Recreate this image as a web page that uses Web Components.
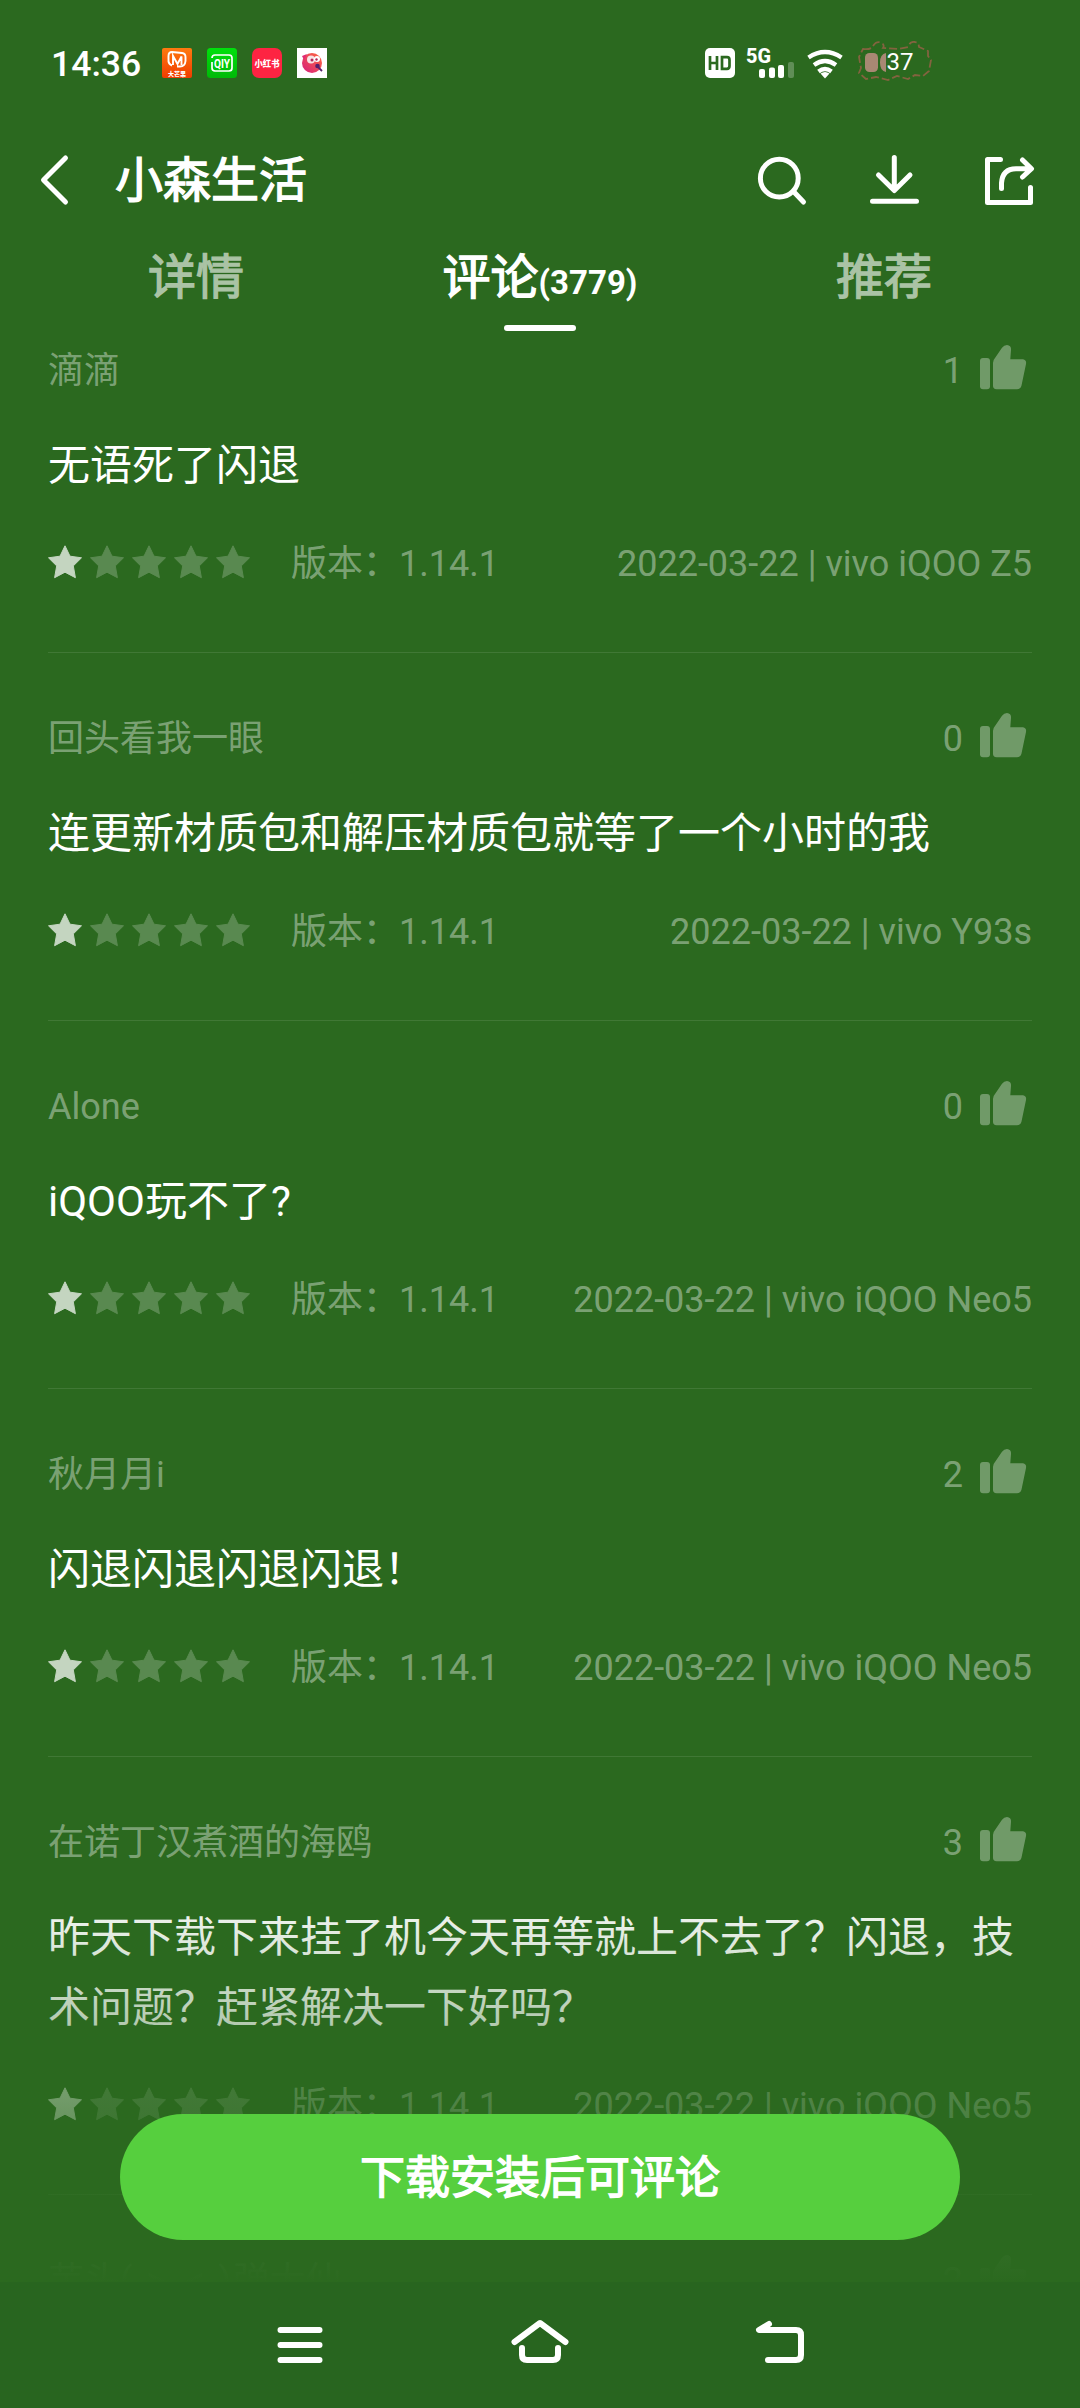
<!DOCTYPE html>
<html lang="zh-CN">
<head>
<meta charset="utf-8">
<title>小森生活</title>
<style>
html,body{margin:0;height:100%;background:#2b691f}
body{font-family:Roboto,"Noto Sans CJK SC",sans-serif;color:#fff;overflow:hidden}
</style>
</head>
<body>
<app-page>
  <status-bar slot="top" time="14:36" battery="37"></status-bar>
  <title-bar slot="top">小森生活</title-bar>
  <tab-bar slot="top">
    <tab-item>详情</tab-item>
    <tab-item active count="(3779)">评论</tab-item>
    <tab-item>推荐</tab-item>
  </tab-bar>
  <review-card first name="滴滴" likes="1" stars="1" version="1.14.1" meta="2022-03-22 | vivo iQOO Z5">无语死了闪退</review-card>
  <review-card name="回头看我一眼" likes="0" stars="1" version="1.14.1" meta="2022-03-22 | vivo Y93s">连更新材质包和解压材质包就等了一个小时的我</review-card>
  <review-card name="Alone" likes="0" stars="1" version="1.14.1" meta="2022-03-22 | vivo iQOO Neo5">iQOO玩不了?</review-card>
  <review-card name="秋月月i" likes="2" stars="1" version="1.14.1" meta="2022-03-22 | vivo iQOO Neo5">闪退闪退闪退闪退！</review-card>
  <review-card name="在诺丁汉煮酒的海鸥" likes="3" stars="1" version="1.14.1" meta="2022-03-22 | vivo iQOO Neo5">昨天下载下来挂了机今天再等就上不去了？闪退，技术问题？赶紧解决一下好吗？</review-card>
  <review-card teaser likes="2"><span slot="name">芋头<span style="letter-spacing:2.5px">( &gt;_&lt; )</span>弹大仙</span></review-card>
  <install-button slot="action">下载安装后可评论</install-button>
  <nav-bar slot="nav"></nav-bar>
</app-page>
<script>
function define(name, render) {
  customElements.define(name, class extends HTMLElement {
    connectedCallback() {
      if (this.shadowRoot) return;
      const t = document.createElement('template');
      t.innerHTML = render(this);
      this.attachShadow({ mode: 'open' }).append(t.content.cloneNode(true));
    }
  });
}

define('app-page', () => `
<style>
:host{display:flex;flex-direction:column;width:1080px;height:2408px;position:relative;overflow:hidden;background:#2b691f}
main{height:1946px;overflow:hidden;flex:none}
.foot{position:absolute;left:0;top:1882px;width:1080px;height:400px;box-sizing:border-box;padding-bottom:42px;
 display:flex;justify-content:center;align-items:flex-end;background:linear-gradient(rgba(43,105,31,0),rgb(43,105,31))}
</style>
<slot name="top"></slot>
<main><slot></slot></main>
<div class="foot"><slot name="action"></slot></div>
<slot name="nav"></slot>`);

define('status-bar', e => `
<style>
:host{display:flex;height:129px;flex:none;box-sizing:border-box;padding:0 0 3px 51px;align-items:center}
.time{font:500 35.6px/40px Roboto,sans-serif;width:111px;padding-top:2px}
.apps{display:flex;gap:15px}
svg{display:block}
.sys{margin-left:378px}
text{font-family:Roboto,"Noto Sans CJK SC",sans-serif}
</style>
<div class="time">${e.getAttribute('time')}</div>
<div class="apps">
 <svg width="30" height="30" viewBox="0 0 30 30"><defs><linearGradient id="o" x2="0" y2="1"><stop stop-color="#ff7a10"/><stop offset="1" stop-color="#f03c00"/></linearGradient></defs><rect width="30" height="30" rx="2" fill="url(#o)"/><path d="M10 17.500Q6 16 6.500 11V8Q6.500 4 10 4L20 5Q23.500 5.500 23.500 9V13Q23 18.500 18 18.500H15M11 17V8L15.500 16L19.500 8.500V17" fill="none" stroke="#fff" stroke-width="1.900"/><text x="15" y="27.500" font-size="6" font-weight="900" text-anchor="middle" fill="#fff">大芒果</text></svg>
 <svg width="30" height="30" viewBox="0 0 30 30"><defs><linearGradient id="g" x2="0" y2="1"><stop stop-color="#00e00c"/><stop offset="1" stop-color="#00b908"/></linearGradient></defs><rect width="30" height="30" rx="3.500" fill="url(#g)"/><path d="M5 10Q5 7 8 7H22Q25 7 25 10V20Q25 23 22 23H8Q5 23 5 20V14" fill="none" stroke="#fff" stroke-width="1.700"/><text x="15" y="19.500" font-size="12" font-weight="700" text-anchor="middle" textLength="16" lengthAdjust="spacingAndGlyphs" fill="#fff">QIY</text></svg>
 <svg width="30" height="30" viewBox="0 0 30 30"><rect width="30" height="30" rx="7" fill="#fd2442"/><text x="15" y="18.500" font-size="9" font-weight="900" text-anchor="middle" textLength="25" lengthAdjust="spacingAndGlyphs" fill="#fff">小红书</text></svg>
 <svg width="30" height="30" viewBox="0 0 30 30"><defs><linearGradient id="p" x1="1" x2="0" y2="1"><stop stop-color="#ff6a3c"/><stop offset="1" stop-color="#d51f7d"/></linearGradient></defs><rect width="30" height="30" fill="#fff"/><circle cx="15" cy="15" r="10" fill="url(#p)"/><path d="M5 8L10 6L7 12Z" fill="#e22b72"/><circle cx="14" cy="11.500" r="4" fill="#f6e4e4"/><circle cx="20" cy="11" r="3" fill="#fff"/><circle cx="15" cy="12" r="1.500" fill="#b4285a"/><circle cx="19.500" cy="11.500" r="1.200" fill="#b4285a"/><circle cx="20.500" cy="18" r="2.300" fill="#55206c"/><path d="M20 18L25 23" stroke="#55206c" stroke-width="1.800"/></svg>
</div>
<svg class="sys" width="230" height="44" viewBox="705 41 230 44">
 <rect x="705" y="48" width="30" height="30" rx="5" fill="#fff"/>
 <path d="M710 56V70M717 56V70M710 63H717M722 57.200H727Q729.500 57.200 729.500 60V66Q729.500 68.800 727 68.800H722Z" fill="none" stroke="#2b691f" stroke-width="2.700"/>
 <text x="746" y="62.500" font-size="19.500" font-weight="800" fill="#fff" textLength="25" lengthAdjust="spacingAndGlyphs">5G</text>
 <g fill="#fff"><rect x="759" y="69" width="6" height="9" rx="2"/><rect x="769" y="67.500" width="6" height="10.500" rx="2"/><rect x="778" y="65" width="6" height="13" rx="2"/><rect x="788" y="62" width="6" height="16" rx="2" opacity=".25"/></g>
 <g fill="none" stroke="#fff" stroke-width="4.300"><path d="M808.500 57.500Q825 46.500 841.500 57.500"/><path d="M814 65Q825 57 836 65"/><path d="M818.500 71.500Q825 66.500 831.500 71.500"/></g><path d="M820.500 73.500Q825 70.500 829.500 73.500L825 78.500Z" fill="#fff"/>
 <path d="M863 49Q871 50 873 46Q876 41 881 42.500Q885 45 883 48L898 49L908 47Q910 41 915 42Q919 43 919 47L928 51V56L931 60L929 71L923 76L915 75L908 79L897 76L888 80L876 77L866 79L859 73L861 68L859 57Z" fill="none" stroke="#83633f" stroke-width="1.800" stroke-dasharray="8 3"/>
 <rect x="865" y="53" width="13" height="19" rx="4.500" fill="#a88873"/><path d="M886 53Q880 54 880 62.500Q880 71 886 72Z" fill="#a88873"/>
 <text x="886.500" y="70" font-size="24" fill="#fff">${e.getAttribute('battery')}</text>
</svg>`);

define('title-bar', () => `
<style>
:host{display:flex;height:100px;flex:none;align-items:center;font-weight:400;-webkit-text-stroke:1.3px currentColor;font-size:48px;line-height:60px}
svg{display:block;fill:none;stroke:#fff;stroke-width:5;stroke-linecap:round;stroke-linejoin:round}
.back{margin-left:38px}
.t{flex:1;margin-left:43px;padding-top:4px}
.acts{display:flex;margin-right:43px}
</style>
<svg class="back" width="34" height="54" viewBox="38 152 34 54"><path d="M65.500 158L43.500 180L65.500 202"/></svg>
<div class="t"><slot></slot></div>
<div class="acts">
<svg width="54" height="54" viewBox="755 152 54 54"><circle cx="779.300" cy="178.200" r="18.900"/><path d="M794 192L803.500 202"/></svg>
<svg width="54" height="54" viewBox="867 152 54 54" style="margin:0 62px 0 58px"><path d="M894.300 157.500V190M878.500 175L894.300 190.500L910 175M872.500 201.200H916.500"/></svg>
<svg width="54" height="54" viewBox="983 152 54 54"><path d="M1000.500 159.500H987.500V202.500H1030.500V187.500M1001.500 188.500V183Q1002.500 168.700 1016 168.700H1030M1022.500 160L1031.500 168.700L1022.500 177"/></svg>
</div>`);

define('tab-bar', () => `
<style>:host{display:flex;height:107px;flex:none;padding:0 24px;box-sizing:border-box}</style><slot></slot>`);

define('tab-item', e => `
<style>
:host{flex:1;display:flex;flex-direction:column;align-items:center;font-size:48px;line-height:60px;color:#aac3a5;padding-top:19px;-webkit-text-stroke:1.3px currentColor}
:host([active]){color:#fff}
small{font-size:33px;font-weight:700;-webkit-text-stroke:0}
i{display:block;width:72px;height:6px;border-radius:3px;background:#fff;margin-top:12px}
</style>
<div><slot></slot>${e.hasAttribute('count') ? `<small>${e.getAttribute('count')}</small>` : ''}</div>
${e.hasAttribute('active') ? '<i></i>' : ''}`);

define('star-rating', e => {
  const n = +e.getAttribute('value');
  let s = '';
  for (let i = 0; i < 5; i++) s += `<svg width="34" height="34" viewBox="0 0 34 34"><path d="M17 .8L22 11.200L33.500 12.800L25.300 20.900L27.400 32.700L17 27.200L6.600 32.700L8.700 20.900L.5 12.800L12 11.200Z" fill="#fff" stroke="#fff" stroke-linejoin="round" opacity="${i < n ? .72 : .215}"/></svg>`;
  return `<style>:host{display:flex;gap:8px}svg{display:block}</style>${s}`;
});

define('like-count', e => `
<style>:host{display:flex;gap:17px;padding-right:5px}span{padding-top:4px}svg{display:block;margin-top:2px}</style>
<span>${e.getAttribute('value')}</span>
<svg width="47" height="45" viewBox="0 0 47 45" fill="#fff" fill-opacity=".33"><rect y="13" width="10" height="31.300" rx="3"/><path d="M13 18Q13 15 15 13L22 2.800Q24 0 27 0Q31.500 .5 31 5L30.300 14.300H43Q46.800 15 46 19L41.500 40.500Q40.500 44.300 37 44.300H16.500Q13 44 13 41Z"/></svg>`);

define('review-card', e => {
  const a = k => e.getAttribute(k) || '';
  return `
<style>
:host{display:block;margin:0 48px;padding:58px 0 67px;border-bottom:1px solid rgba(255,255,255,.1);font-size:36px;line-height:48px}
:host([first]){padding-top:7px}
:host([teaser]){border:0}
.row{display:flex;height:48px;color:rgba(255,255,255,.4)}
.name{flex:1;padding-top:4px}
p{margin:39px 0 36px;font-size:42px;line-height:70px;color:#fff;padding-top:1px}
star-rating{padding-top:8px;margin-right:41px}
.txt{padding-top:3px}.m{margin-left:auto}
</style>
<div class="row"><div class="name"><slot name="name">${a('name')}</slot></div><like-count value="${a('likes')}"></like-count></div>
${e.hasAttribute('teaser') ? '' : `<p><slot></slot></p>
<div class="row"><star-rating value="${a('stars')}"></star-rating><div class="txt">版本：${a('version')}</div><div class="txt m">${a('meta')}</div></div>`}`;
});

define('install-button', () => `
<style>:host{display:flex;width:840px;height:126px;box-sizing:border-box;padding-top:3px;border-radius:63px;background:#56cf3e;align-items:center;justify-content:center;font-size:45px;-webkit-text-stroke:1.4px currentColor;line-height:60px}</style><slot></slot>`);

define('nav-bar', () => `
<style>:host{display:flex;height:126px;flex:none;background:#28651f;justify-content:center;align-items:flex-start;gap:180px}
svg{display:block;margin-top:30px;fill:none;stroke:#fff;stroke-width:6;stroke-linecap:round;stroke-linejoin:round}</style>
<svg width="60" height="60" viewBox="270 2312 60 60"><path d="M280.500 2330H319.500M280.500 2345H319.500M280.500 2360H319.500"/></svg>
<svg width="60" height="60" viewBox="510 2312 60 60"><path d="M514.500 2342L540 2323L565.500 2342M522 2348V2355Q522 2360 527 2360H553Q558 2360 558 2355V2348"/></svg>
<svg width="60" height="60" viewBox="750 2312 60 60"><path d="M769 2324L759 2330H796Q801 2330 801 2335V2355Q801 2360 796 2360H768"/></svg>`);
</script>
</body>
</html>
